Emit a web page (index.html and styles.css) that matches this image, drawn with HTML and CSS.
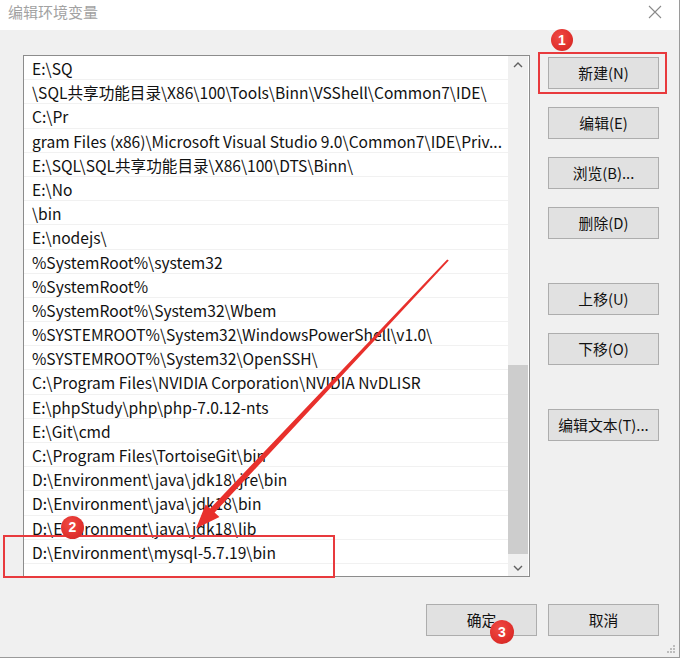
FILE: index.html
```html
<!DOCTYPE html>
<html lang="zh-CN">
<head>
<meta charset="utf-8">
<title>编辑环境变量</title>
<link rel="stylesheet" href="styles.css">
</head>
<body>
<div class="dialog">
  <div class="titlebar">
    <span class="title">编辑环境变量</span>
    <svg class="close" width="14" height="14" viewBox="0 0 14 14"><path d="M1 1 L13 13 M13 1 L1 13" stroke="#8a8a8a" stroke-width="1.1" fill="none"/></svg>
  </div>
  <div class="content">
    <div class="main">
      <div class="listbox">
        <ul class="rows">
          <li>E:\SQ</li>
          <li>\SQL共享功能目录\X86\100\Tools\Binn\VSShell\Common7\IDE\</li>
          <li>C:\Pr</li>
          <li>gram Files (x86)\Microsoft Visual Studio 9.0\Common7\IDE\Priv...</li>
          <li>E:\SQL\SQL共享功能目录\X86\100\DTS\Binn\</li>
          <li>E:\No</li>
          <li>\bin</li>
          <li>E:\nodejs\</li>
          <li>%SystemRoot%\system32</li>
          <li>%SystemRoot%</li>
          <li>%SystemRoot%\System32\Wbem</li>
          <li>%SYSTEMROOT%\System32\WindowsPowerShell\v1.0\</li>
          <li>%SYSTEMROOT%\System32\OpenSSH\</li>
          <li>C:\Program Files\NVIDIA Corporation\NVIDIA NvDLISR</li>
          <li>E:\phpStudy\php\php-7.0.12-nts</li>
          <li>E:\Git\cmd</li>
          <li>C:\Program Files\TortoiseGit\bin</li>
          <li>D:\Environment\java\jdk18\jre\bin</li>
          <li>D:\Environment\java\jdk18\bin</li>
          <li>D:\Environment\java\jdk18\lib</li>
          <li>D:\Environment\mysql-5.7.19\bin</li>
        </ul>
        <div class="scrollbar">
          <div class="sb-btn">
            <svg width="10" height="6" viewBox="0 0 10 6"><path d="M1 5 L5 1 L9 5" stroke="#606060" stroke-width="1.4" fill="none"/></svg>
          </div>
          <div class="sb-track"><div class="sb-thumb"></div></div>
          <div class="sb-btn">
            <svg width="10" height="6" viewBox="0 0 10 6"><path d="M1 1 L5 5 L9 1" stroke="#606060" stroke-width="1.4" fill="none"/></svg>
          </div>
        </div>
      </div>
      <div class="side">
        <button class="btn">新建(N)</button>
        <button class="btn">编辑(E)</button>
        <button class="btn">浏览(B)...</button>
        <button class="btn">删除(D)</button>
        <button class="btn sep">上移(U)</button>
        <button class="btn">下移(O)</button>
        <button class="btn sep">编辑文本(T)...</button>
      </div>
    </div>
    <div class="footer">
      <button class="btn">确定</button>
      <button class="btn">取消</button>
    </div>
  </div>
  <svg class="grip" width="10" height="10" viewBox="0 0 10 10">
    <rect x="7" y="1" width="2" height="2" fill="#bdbdbd"/>
    <rect x="4" y="4" width="2" height="2" fill="#bdbdbd"/>
    <rect x="7" y="4" width="2" height="2" fill="#bdbdbd"/>
    <rect x="1" y="7" width="2" height="2" fill="#bdbdbd"/>
    <rect x="4" y="7" width="2" height="2" fill="#bdbdbd"/>
    <rect x="7" y="7" width="2" height="2" fill="#bdbdbd"/>
  </svg>
</div>

<div class="mark mark-new"></div>
<div class="mark mark-row"></div>
<svg class="arrow" width="686" height="662" viewBox="0 0 686 662">
  <polygon points="448.8,260.4 214.6,512.6 219.4,517 196,528.5 205.6,504.4 210.2,508.4 447.2,259.6" fill="#e8302c"/>
</svg>
<span class="badge b1">1</span>
<span class="badge b2">2</span>
<span class="badge b3">3</span>
</body>
</html>
```

FILE: styles.css
```css
* { box-sizing: border-box; }
html, body { margin: 0; padding: 0; }
body {
  width: 686px;
  height: 662px;
  background: #ffffff;
  font-family: "Noto Sans CJK SC", "Noto Sans", sans-serif;
  position: relative;
  overflow: hidden;
}
.dialog {
  position: relative;
  width: 680px;
  height: 658px;
  border-right: 1px solid #9a9a9a;
  border-bottom: 1px solid #9a9a9a;
  display: flex;
  flex-direction: column;
}
.titlebar {
  height: 30px;
  background: #ffffff;
  display: flex;
  align-items: center;
  justify-content: space-between;
  padding: 0 17px 6px 8px;
}
.title {
  font-family: "Noto Sans CJK SC", sans-serif;
  font-size: 15px;
  color: #a2a2a2;
  line-height: 20px;
}
.close { display: block; }
.content {
  flex: 1;
  background: #f0f0f0;
  padding: 25px 20px 0 23px;
  display: flex;
  flex-direction: column;
}
.main {
  display: flex;
  gap: 18px;
}
.listbox {
  width: 507px;
  height: 522px;
  border: 1px solid #8c8c8c;
  background: #ffffff;
  display: flex;
  overflow: hidden;
}
.rows {
  list-style: none;
  margin: 0;
  padding: 0;
  flex: 1;
  min-width: 0;
}
.rows li {
  height: 24.2px;
  line-height: 24px;
  padding-left: 8px;
  font-family: "Noto Sans CJK SC", "Noto Sans", sans-serif;
  font-size: 15.6px;
  color: #111111;
  white-space: nowrap;
  overflow: hidden;
  border-bottom: 1px solid #f1f1f1;
}
.scrollbar {
  width: 20px;
  background: #f0f0f0;
  display: flex;
  flex-direction: column;
  margin-right: 1px;
}
.sb-btn {
  height: 17px;
  display: flex;
  align-items: center;
  justify-content: center;
}
.sb-track { flex: 1; }
.sb-thumb {
  margin-top: 292px;
  height: 189px;
  background: #cdcdcd;
}
.side {
  display: flex;
  flex-direction: column;
  gap: 18px;
  padding-top: 2px;
}
.btn {
  width: 111px;
  height: 32px;
  background: #e1e1e1;
  border: 1px solid #adadad;
  font-family: "Noto Sans CJK SC", "Noto Sans", sans-serif;
  font-size: 14.8px;
  color: #111111;
  padding: 0;
  line-height: 30px;
}
.btn.sep { margin-top: 26px; }
.footer {
  display: flex;
  justify-content: flex-end;
  gap: 11px;
  margin-top: 27px;
}
.grip {
  position: absolute;
  right: 3px;
  bottom: 3px;
}
.mark {
  position: absolute;
  border: 2px solid #e83a3d;
}
.mark-new { left: 538px; top: 52px; width: 129px; height: 42px; }
.mark-row { left: 3px; top: 535px; width: 332px; height: 43px; }
.arrow { position: absolute; left: 0; top: 0; }
.badge {
  position: absolute;
  width: 22px;
  height: 22px;
  border-radius: 50%;
  background: radial-gradient(circle at 40% 35%, #f04a44 0%, #e0302c 60%, #c92422 100%);
  color: #ffffff;
  font-family: "Liberation Sans", Arial, sans-serif;
  font-size: 14px;
  font-weight: bold;
  line-height: 22px;
  text-align: center;
}
.b1 { left: 551px; top: 29px; }
.b2 { left: 61px; top: 516px; width: 23px; height: 23px; line-height: 23px; }
.b3 { left: 490px; top: 620px; width: 24px; height: 24px; line-height: 24px; }
```
